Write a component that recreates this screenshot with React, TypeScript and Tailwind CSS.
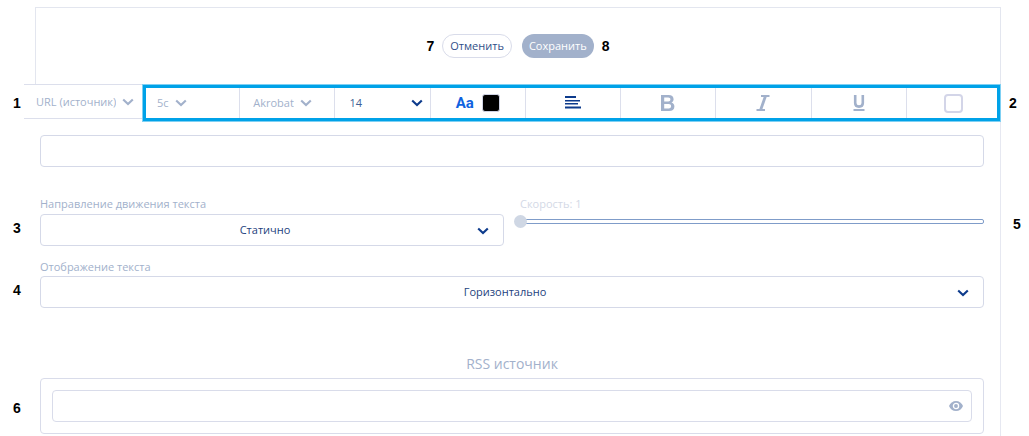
import React, { useState } from "react";

const NAVY = "#0d3b8c";
const MUTED = "#a2b1cb";

function Mark({ children }: { children: React.ReactNode }) {
  return (
    <span className="block font-['Liberation_Sans',sans-serif] text-sm leading-4 font-bold text-black">
      {children}
    </span>
  );
}

function Chevron({ color }: { color: string }) {
  return (
    <svg width="12" height="8" viewBox="0 0 12 8" fill="none" stroke={color} strokeWidth="2.1" aria-hidden="true">
      <path d="M1.2 1.4 6 6.1l4.8-4.7" />
    </svg>
  );
}

function CompactSelect({ label, options }: { label: string; options: string[] }) {
  return (
    <span className="relative inline-flex items-center">
      <select
        aria-label={label}
        className="field-sizing-content appearance-none bg-transparent pr-[18px] text-[11px] leading-4 text-[#a2b1cb] outline-none"
      >
        {options.map((o) => (
          <option key={o}>{o}</option>
        ))}
      </select>
      <span className="pointer-events-none absolute right-0">
        <Chevron color={MUTED} />
      </span>
    </span>
  );
}

function WideSelect({ id, options }: { id: string; options: string[] }) {
  return (
    <div className="relative flex items-center">
      <select
        id={id}
        className="h-8 w-full appearance-none rounded border border-[#d5d9e8] bg-white pr-[14px] text-center text-[11px] text-[#1d3f7d] outline-none [text-align-last:center]"
      >
        {options.map((o) => (
          <option key={o}>{o}</option>
        ))}
      </select>
      <span className="pointer-events-none absolute right-[15px] pt-[2px]">
        <Chevron color={NAVY} />
      </span>
    </div>
  );
}

function Row({
  left,
  right,
  className = "",
  children,
}: {
  left?: React.ReactNode;
  right?: React.ReactNode;
  className?: string;
  children: React.ReactNode;
}) {
  return (
    <div className="grid grid-cols-[40px_minmax(0,1fr)_45px]">
      <div className="flex items-end pl-[13px]">
        {left && <div className="pb-[10px]">{left}</div>}
      </div>
      <div className={className}>{children}</div>
      <div className="ml-4 flex items-end border-l border-[#e6e8f1] pl-3">
        {right && <div className="pb-[14px]">{right}</div>}
      </div>
    </div>
  );
}

const cell = "flex items-center border-l border-[#dcdfec] first:border-l-0";
const label = "block text-[11px] leading-4 text-[#a2b1cb]";

export default function App() {
  const [speed, setSpeed] = useState(1);
  return (
    <main className="flex min-h-screen flex-col bg-white pt-[7px] font-['Open_Sans','Noto_Sans',sans-serif]">
      <header className="mr-7 ml-[35px] flex h-[77px] items-center justify-center border-x border-t border-[#e3e6ef]">
        <Mark>7</Mark>
        <button className="ml-2 h-6 rounded-full border border-[#d9dcea] px-[7px] text-[11px] text-[#2f4f88]">
          Отменить
        </button>
        <button className="mr-2 ml-[10px] h-6 rounded-full bg-[#a2b1cb] px-[7px] text-[11px] text-white">
          Сохранить
        </button>
        <Mark>8</Mark>
      </header>

      <div className="flex h-[38px] items-center">
        <div className="w-6 shrink-0 pl-[13px]">
          <Mark>1</Mark>
        </div>
        <div className="flex h-[35px] w-[118px] shrink-0 items-center self-start border-y border-[#dcdfec] pl-3">
          <CompactSelect label="Тип источника" options={["URL (источник)", "Текст"]} />
        </div>
        <div className="relative grid h-full min-w-0 flex-1 grid-cols-9 pl-[2px]">
          <div className={`${cell} pl-[13px]`}>
            <CompactSelect label="Интервал" options={["5с", "10с", "15с"]} />
          </div>
          <div className={`${cell} pl-[13px]`}>
            <CompactSelect label="Шрифт" options={["Akrobat", "Roboto"]} />
          </div>
          <div className={`${cell} relative`}>
            <select
              aria-label="Размер шрифта"
              className="h-6 w-full appearance-none bg-transparent pl-[14px] text-[11px] text-[#3f5f95] outline-none"
            >
              <option>14</option>
              <option>16</option>
              <option>18</option>
            </select>
            <span className="pointer-events-none absolute right-[7px]">
              <Chevron color={NAVY} />
            </span>
          </div>
          <button aria-label="Цвет текста" className={`${cell} justify-center gap-2`}>
            <span className="font-[Roboto,sans-serif] text-[15px] leading-5 font-bold text-[#0f62e0]">Aa</span>
            <span className="size-[18px] rounded-[3px] border border-[#cfd3e4] bg-black" />
          </button>
          <button aria-label="Выравнивание" className={`${cell} justify-center`}>
            <svg width="16" height="14" viewBox="0 0 16 14" fill={NAVY} aria-hidden="true">
              <path d="M0 0h11v2H0zM0 4h15v1.600H0zM0 7h13v1.600H0zM0 10.400h16v2H0z" />
            </svg>
          </button>
          <button aria-label="Полужирный" className={`${cell} justify-center`}>
            <svg width="14" height="16" viewBox="0 0 14 16" fill={MUTED} fillRule="evenodd" aria-hidden="true">
              <path d="M0 0h7.5C10.8 0 12.6 1.6 12.6 4.200c0 1.600-.8 2.700-2.200 3.300 1.900.5 3 1.900 3 3.900C13.400 14.300 11.400 16 8 16H0zM3.200 2.600v3.800h4c1.400 0 2.200-.7 2.200-1.900s-.8-1.900-2.200-1.900zM3.200 9v4.400h4.500c1.500 0 2.400-.8 2.400-2.200S9.200 9 7.700 9z" />
            </svg>
          </button>
          <button aria-label="Курсив" className={`${cell} justify-center`}>
            <svg width="14" height="16" viewBox="0 0 14 16" fill="none" stroke={MUTED} aria-hidden="true">
              <path d="M5 1h8.500M.5 15H9" strokeWidth="1.800" />
              <path d="M9.500 1 4.600 15" strokeWidth="2.800" />
            </svg>
          </button>
          <button aria-label="Подчёркнутый" className={`${cell} justify-center`}>
            <svg width="12" height="16" viewBox="0 0 12 16" fill="none" stroke={MUTED} aria-hidden="true">
              <path d="M2.200 0v8c0 2.300 1.300 3.600 3.800 3.600s3.800-1.300 3.800-3.600V0" strokeWidth="2.600" />
              <path d="M.5 15h11" strokeWidth="2" />
            </svg>
          </button>
          <div className={`${cell} justify-center`}>
            <input
              type="checkbox"
              aria-label="Фон"
              className="size-[19px] appearance-none rounded border-2 border-[#d3d5e8] bg-white checked:bg-[#a2b1cb]"
            />
          </div>
          <div className="pointer-events-none absolute inset-0 border border-[#7fd0f3]" />
          <div className="pointer-events-none absolute inset-px border-3 border-[#00a2e8]" />
        </div>
        <div className="w-7 shrink-0 pl-2">
          <Mark>2</Mark>
        </div>
      </div>

      <Row className="pt-[13px]">
        <input
          aria-label="Текст"
          className="block h-8 w-full rounded border border-[#d5d9e8] px-3 text-[11px] text-[#1d3f7d] outline-none"
        />
      </Row>

      <Row
        left={<Mark>3</Mark>}
        right={<Mark>5</Mark>}
        className="grid grid-cols-2 gap-4 pt-[29px]"
      >
        <div>
          <label htmlFor="direction" className={`${label} mb-[2px]`}>
            Направление движения текста
          </label>
          <WideSelect id="direction" options={["Статично", "Справа налево"]} />
        </div>
        <div>
          <label htmlFor="speed" className="block text-[11px] leading-4 text-[#d3d9e6]">
            Скорость: {speed}
          </label>
          <div className="pt-[3px]">
            <input
              id="speed"
              type="range"
              min={1}
              max={10}
              value={speed}
              onChange={(e) => setSpeed(Number(e.target.value))}
              className="block h-[13px] w-full appearance-none bg-transparent outline-none [&::-webkit-slider-runnable-track]:h-[5px] [&::-webkit-slider-runnable-track]:rounded-[2px] [&::-webkit-slider-runnable-track]:border [&::-webkit-slider-runnable-track]:border-[#7f9cc9] [&::-webkit-slider-thumb]:-mt-[5px] [&::-webkit-slider-thumb]:-ml-[7px] [&::-webkit-slider-thumb]:size-[13px] [&::-webkit-slider-thumb]:appearance-none [&::-webkit-slider-thumb]:rounded-full [&::-webkit-slider-thumb]:bg-[#cfd7e4]"
            />
          </div>
        </div>
      </Row>

      <Row left={<Mark>4</Mark>} className="pt-[13px]">
        <label htmlFor="display" className={`${label} mb-[1px]`}>
          Отображение текста
        </label>
        <WideSelect id="display" options={["Горизонтально", "Вертикально"]} />
      </Row>

      <Row className="pt-[46px] pb-1">
        <h2 className="text-center text-sm leading-5 text-[#a2b1cb]">RSS источник</h2>
      </Row>

      <Row left={<div className="pb-2"><Mark>6</Mark></div>}>
        <div className="relative flex items-center rounded border border-[#d9dcea] p-[11px]">
          <input
            aria-label="RSS источник"
            className="h-8 w-full rounded border border-[#d9dcea] pr-9 pl-3 text-[11px] text-[#1d3f7d] outline-none"
          />
          <button aria-label="Показать" className="absolute right-5">
            <svg width="14" height="10" viewBox="0 0 14 10" aria-hidden="true">
              <path d="M0 5C1.200 2 3.800 0 7 0s5.800 2 7 5c-1.200 3-3.800 5-7 5S1.200 8 0 5z" fill={MUTED} />
              <circle cx="7" cy="5" r="2.600" fill={MUTED} stroke="#fff" strokeWidth="1.300" />
            </svg>
          </button>
        </div>
      </Row>
      <div className="mr-7 flex-1 border-r border-[#e6e8f1]" />
    </main>
  );
}
